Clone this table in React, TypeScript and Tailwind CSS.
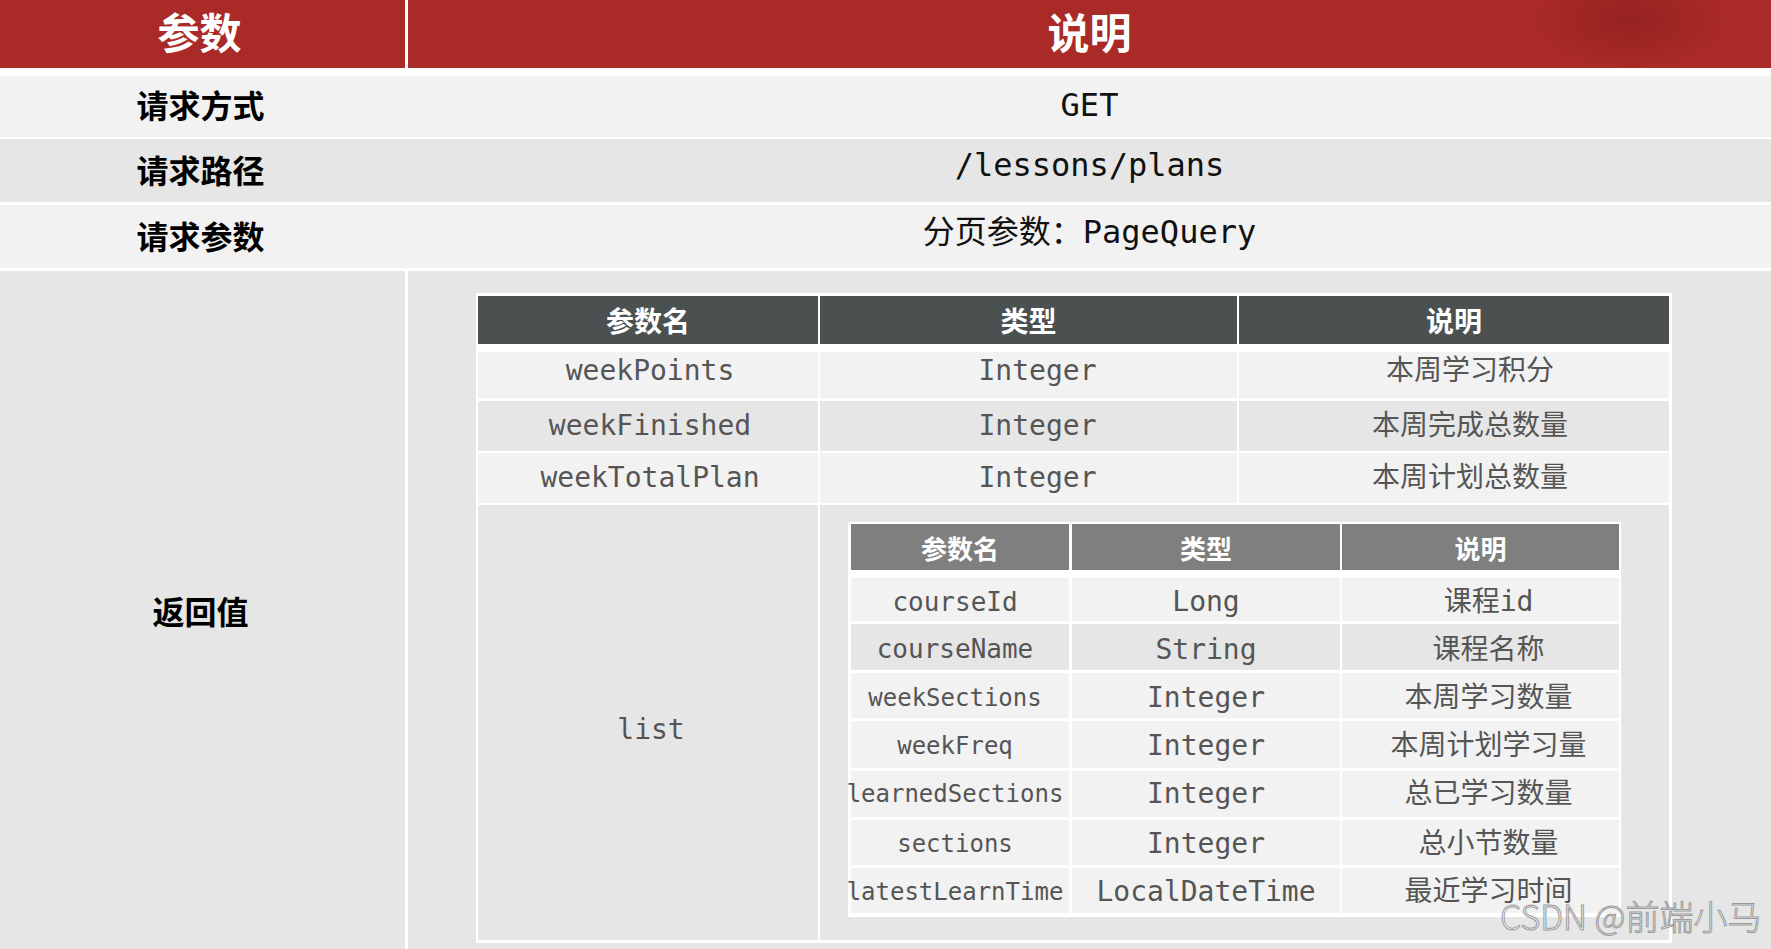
const mono = "font-['DejaVu_Sans_Mono','Noto_Sans_CJK_SC',monospace]";
const cjk = "font-['Noto_Sans_CJK_SC','Noto_Sans',sans-serif]";

const topRows = [
  { label: '请求方式', value: 'GET', cls: 'mt-[8px] h-[61px] bg-[#f2f2f2]', lp: 'pb-[6px]', vp: 'pb-[4px]' },
  { label: '请求路径', value: '/lessons/plans', cls: 'mt-[2px] h-[63px] bg-[#e6e6e6]', lp: 'pb-[3px]', vp: 'pb-[12px]' },
  { label: '请求参数', value: '分页参数：PageQuery', cls: 'mt-[3px] h-[63px] bg-[#f2f2f2]', lp: 'pb-[3px]', vp: 'pb-[10px]' },
];

const fields = [
  { name: 'weekPoints', type: 'Integer', desc: '本周学习积分', row: 'mt-[8px] h-[46px]', bg: 'bg-[#f2f2f2] pb-[8px]' },
  { name: 'weekFinished', type: 'Integer', desc: '本周完成总数量', row: 'mt-[3px] h-[50px]', bg: 'bg-[#e6e6e6]' },
  { name: 'weekTotalPlan', type: 'Integer', desc: '本周计划总数量', row: 'mt-[2px] h-[50px]', bg: 'bg-[#f2f2f2]' },
];

const listFields = [
  { name: 'courseId', type: 'Long', desc: '课程id', row: 'mt-[8px] h-[43px]', bg: 'bg-[#f2f2f2] pt-[5px]', size: 'text-[26px]' },
  { name: 'courseName', type: 'String', desc: '课程名称', row: 'mt-[3px] h-[46px]', bg: 'bg-[#e6e6e6] pt-[5px]', size: 'text-[26px]' },
  { name: 'weekSections', type: 'Integer', desc: '本周学习数量', row: 'mt-[3px] h-[45px]', bg: 'bg-[#f2f2f2] pt-[5px]', size: 'text-[24px]' },
  { name: 'weekFreq', type: 'Integer', desc: '本周计划学习量', row: 'mt-[3px] h-[47px]', bg: 'bg-[#f2f2f2] pt-[3px]', size: 'text-[24px]' },
  { name: 'learnedSections', type: 'Integer', desc: '总已学习数量', row: 'mt-[3px] h-[46px]', bg: 'bg-[#f2f2f2]', size: 'text-[24px]' },
  { name: 'sections', type: 'Integer', desc: '总小节数量', row: 'mt-[3px] h-[45px]', bg: 'bg-[#f2f2f2] pt-[2px]', size: 'text-[24px]' },
  { name: 'latestLearnTime', type: 'LocalDateTime', desc: '最近学习时间', row: 'mt-[3px] h-[45px]', bg: 'bg-[#f2f2f2] pt-[3px]', size: 'text-[24px]' },
];

function ListTable() {
  return (
    <div className="flex w-[773px] flex-col bg-white pt-[2px] pr-[2px] pb-[4px] pl-[3px]">
      <div className={`flex h-[46px] font-bold text-[26px] text-white ${cjk}`}>
        <div className="flex w-[218px] items-center justify-center bg-[#7f7f7f]">参数名</div>
        <div className="ml-[3px] flex w-[268px] items-center justify-center bg-[#7f7f7f]">类型</div>
        <div className="ml-[2px] flex flex-1 items-center justify-center bg-[#7f7f7f]">说明</div>
      </div>
      {listFields.map((f) => (
        <div key={f.name} className={`flex text-[#555] ${mono} ${f.row}`}>
          <div className={`flex w-[218px] items-center justify-center whitespace-nowrap pr-[10px] ${f.size} ${f.bg}`}>
            {f.name}
          </div>
          <div className={`ml-[3px] flex w-[268px] items-center justify-center text-[28px] ${f.bg}`}>
            {f.type}
          </div>
          <div className={`ml-[2px] flex flex-1 items-center justify-center pl-[16px] text-[28px] ${f.bg}`}>
            {f.desc}
          </div>
        </div>
      ))}
    </div>
  );
}

function ResultTable() {
  return (
    <div className="flex w-[1196px] flex-col bg-white pt-[3px] pr-[3px] pb-[3px] pl-[2px]">
      <div className={`flex h-[48px] font-bold text-[28px] text-white ${cjk}`}>
        <div className="flex w-[340px] items-center justify-center bg-[#4b5151]">参数名</div>
        <div className="ml-[2px] flex w-[417px] items-center justify-center bg-[#4b5151]">类型</div>
        <div className="ml-[2px] flex flex-1 items-center justify-center bg-[#4b5151]">说明</div>
      </div>
      {fields.map((f) => (
        <div key={f.name} className={`flex text-[28px] text-[#555] ${mono} ${f.row}`}>
          <div className={`flex w-[340px] items-center justify-center pl-[4px] ${f.bg}`}>{f.name}</div>
          <div className={`ml-[2px] flex w-[417px] items-center justify-center pl-[18px] ${f.bg}`}>{f.type}</div>
          <div className={`ml-[2px] flex flex-1 items-center justify-center pl-[32px] ${f.bg}`}>{f.desc}</div>
        </div>
      ))}
      <div className="mt-[2px] flex h-[435px]">
        <div className={`flex w-[340px] items-center justify-center bg-[#e6e6e6] pt-[14px] pl-[6px] text-[28px] text-[#555] ${mono}`}>
          list
        </div>
        <div className="ml-[2px] flex-1 bg-[#e6e6e6] pt-[17px] pl-[28px]">
          <ListTable />
        </div>
      </div>
    </div>
  );
}

export default function App() {
  return (
    <div className="relative flex h-[949px] w-[1771px] flex-col overflow-hidden bg-white">
      <div className={`relative flex h-[68px] bg-[#aa2a27] font-bold text-[42px] text-white ${cjk}`}>
        <div className="flex w-[405px] items-center justify-center pb-[8px] pr-[6px]">参数</div>
        <div className="flex flex-1 items-center justify-center border-l-[3px] border-white pb-[8px]">说明</div>
        <div className="pointer-events-none absolute left-[1530px] top-[-30px] h-[100px] w-[200px] bg-[radial-gradient(ellipse_at_center,rgba(110,20,20,0.35),transparent_70%)]" />
      </div>
      {topRows.map((r) => (
        <div key={r.label} className={`relative flex ${r.cls}`}>
          <div className={`flex w-[405px] items-center justify-center pr-[4px] font-bold text-[32px] text-black ${cjk} ${r.lp}`}>
            {r.label}
          </div>
          <div className={`ml-[3px] flex flex-1 items-center justify-center text-[32px] text-[#111] ${mono} ${r.vp}`}>
            {r.value}
          </div>
        </div>
      ))}
      <div className="mt-[3px] flex flex-1 bg-[#e6e6e6]">
        <div className={`flex w-[405px] items-center justify-center pr-[4px] font-bold text-[32px] text-black ${cjk}`}>
          返回值
        </div>
        <div className="border-l-[3px] border-white pt-[22px] pl-[68px]">
          <ResultTable />
        </div>
      </div>
      <div className={`absolute left-[1500px] top-[899px] whitespace-nowrap font-light text-[34px] leading-none text-[#f4f4f4] [-webkit-text-stroke:1px_#9a9a9a] ${cjk}`}>
        CSDN @前端小马
      </div>
    </div>
  );
}
